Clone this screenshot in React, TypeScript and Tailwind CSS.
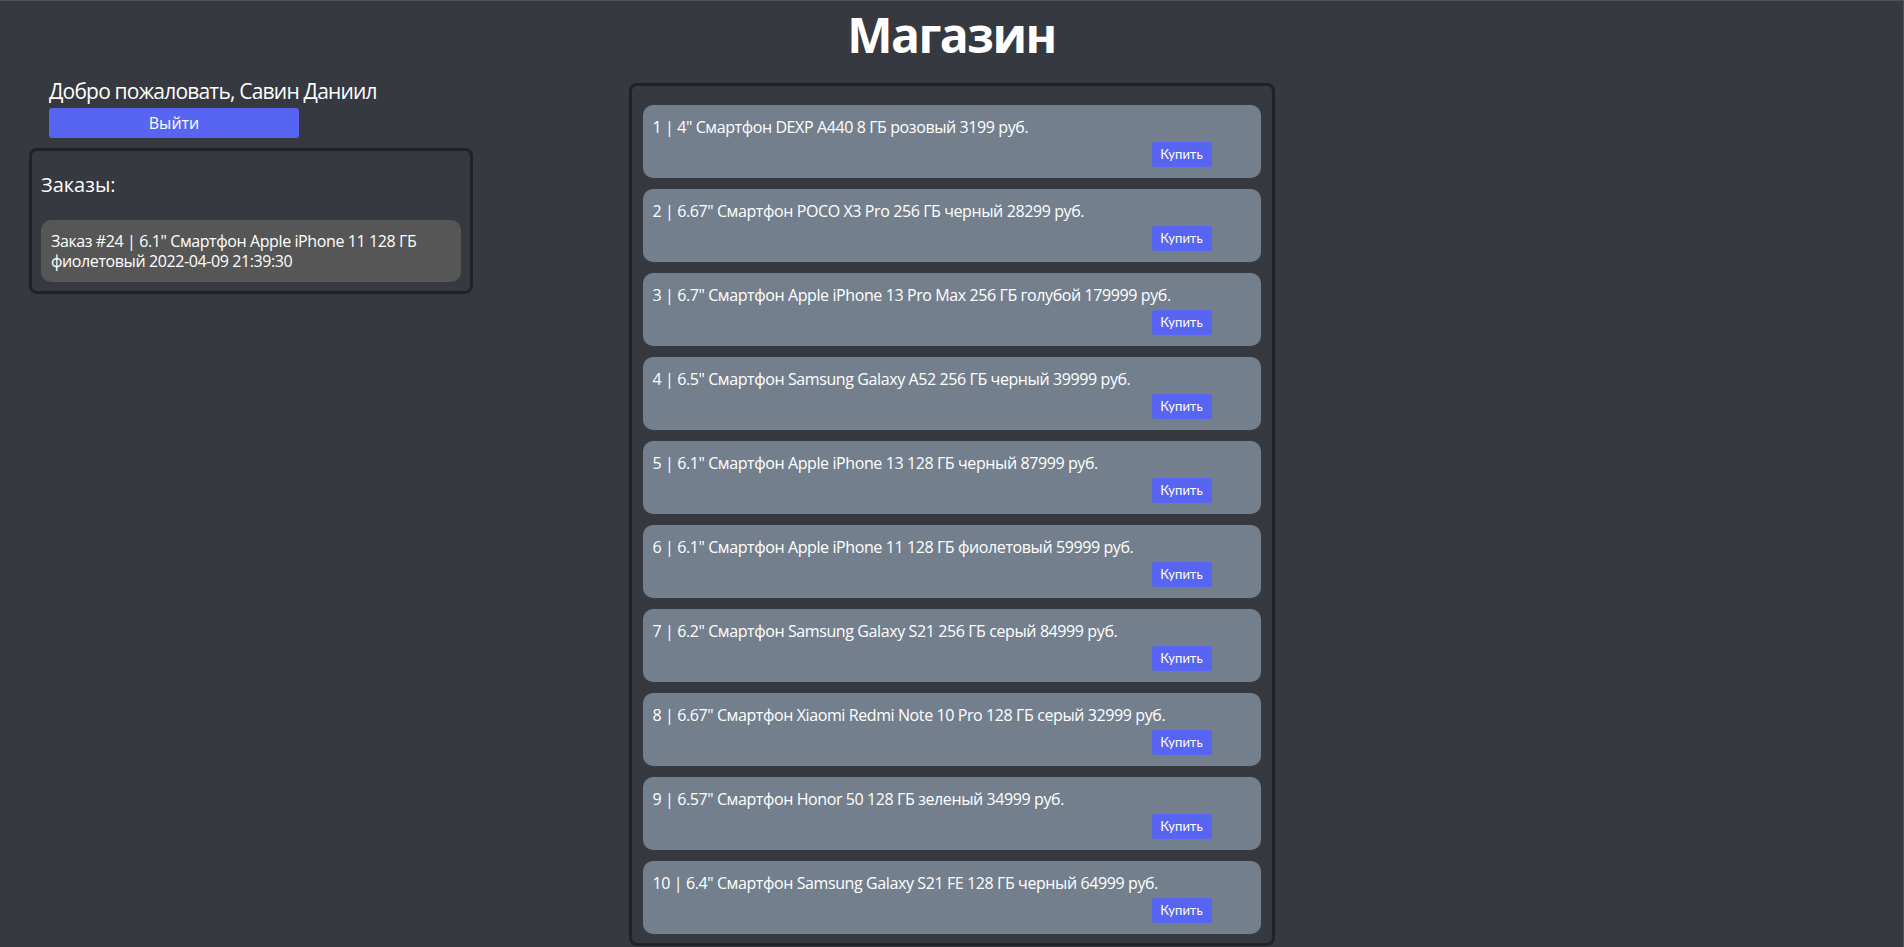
import React from "react"

const products = [
  "1 | 4\" Смартфон DEXP A440 8 ГБ розовый 3199 руб.",
  "2 | 6.67\" Смартфон POCO X3 Pro 256 ГБ черный 28299 руб.",
  "3 | 6.7\" Смартфон Apple iPhone 13 Pro Max 256 ГБ голубой 179999 руб.",
  "4 | 6.5\" Смартфон Samsung Galaxy A52 256 ГБ черный 39999 руб.",
  "5 | 6.1\" Смартфон Apple iPhone 13 128 ГБ черный 87999 руб.",
  "6 | 6.1\" Смартфон Apple iPhone 11 128 ГБ фиолетовый 59999 руб.",
  "7 | 6.2\" Смартфон Samsung Galaxy S21 256 ГБ серый 84999 руб.",
  "8 | 6.67\" Смартфон Xiaomi Redmi Note 10 Pro 128 ГБ серый 32999 руб.",
  "9 | 6.57\" Смартфон Honor 50 128 ГБ зеленый 34999 руб.",
  "10 | 6.4\" Смартфон Samsung Galaxy S21 FE 128 ГБ черный 64999 руб.",
]

const comic = "font-['Comic_Sans_MS','Open_Sans',sans-serif]"

export default function App() {
  return (
    <div className={`min-h-[947px] bg-[#36393f] border-t border-r border-[#50535a] text-white ${comic}`}>
      {/* Header */}
      <div className="h-[75px] flex justify-center">
        <h1 className="pt-[10px] text-[48px] leading-none font-bold tracking-[-1.5px]">Магазин</h1>
      </div>

      <div className="grid grid-cols-[1fr_646px_1fr]">
        {/* Left column: user + orders */}
        <div className="pl-[29px]">
          <div className="ml-[20px]">
            <div className="pt-[2px] text-[21px] leading-[26px] tracking-[-0.8px]">Добро пожаловать, Савин Даниил</div>
            <button className="mt-[4px] w-[250px] h-[30px] bg-[#5865f2] rounded-[3px] text-[16px] text-white">
              Выйти
            </button>
          </div>

          <div className="mt-[10px] w-[444px] border-[3px] border-[#202225] rounded-[8px] px-[9px] pt-[22px] pb-[9px]">
            <div className="text-[20px] leading-[24px]">Заказы:</div>
            <div className="mt-[23px] bg-[#565656] rounded-[10px] px-[10px] pt-[11px] pb-[11px] text-[16px] leading-[20px] tracking-[-0.4px]">
              Заказ #24 | 6.1" Смартфон Apple iPhone 11 128 ГБ фиолетовый 2022-04-09 21:39:30
            </div>
          </div>
        </div>

        {/* Product list */}
        <div className="mt-[7px] border-[3px] border-[#202225] rounded-[8px] px-[11px] pt-[19px] pb-[9px] flex flex-col gap-[11px]">
          {products.map((p) => (
            <div key={p} className="bg-[#747f8d] rounded-[10px] px-[10px] pt-[11px] pb-[11px]">
              <div className="text-[16px] leading-[22px] tracking-[-0.4px]">{p}</div>
              <div className="mt-[4px] flex justify-end pr-[39px]">
                <button className="w-[60px] h-[25px] bg-[#5865f2] rounded-[3px] text-[13px] text-white font-['Lato',sans-serif]">
                  Купить
                </button>
              </div>
            </div>
          ))}
        </div>

        <div />
      </div>
    </div>
  )
}
